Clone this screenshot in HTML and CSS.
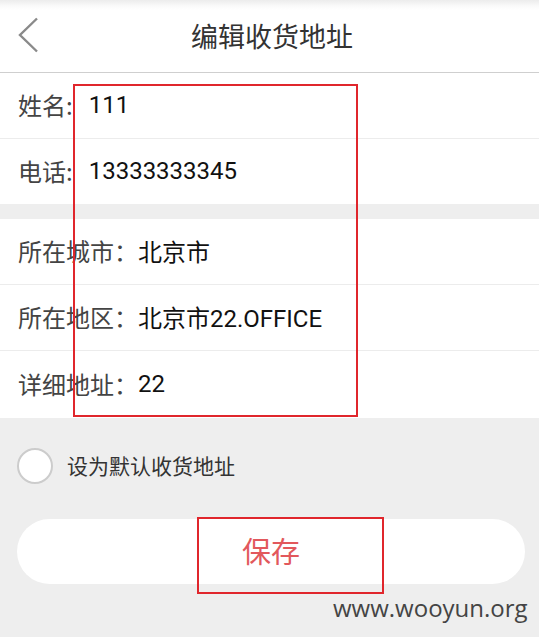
FILE: index.html
```html
<!DOCTYPE html>
<html lang="zh">
<head>
<meta charset="utf-8">
<title>编辑收货地址</title>
<link rel="stylesheet" href="styles.css">
</head>
<body>
<div class="page">
  <header class="topbar">
    <svg class="back" width="22" height="36" viewBox="0 0 22 36"><path d="M20 1.5 L3 18 L20 34.5" fill="none" stroke="#8a8a8a" stroke-width="2.4"/></svg>
    <h1 class="title">编辑收货地址</h1>
  </header>

  <section class="group">
    <div class="row"><span class="label">姓名:</span><span class="value v-short">111</span></div>
    <div class="row"><span class="label">电话:</span><span class="value v-short">13333333345</span></div>
  </section>

  <section class="group group-second">
    <div class="row"><span class="label">所在城市：</span><span class="value">北京市</span></div>
    <div class="row"><span class="label">所在地区：</span><span class="value">北京市22.OFFICE</span></div>
    <div class="row row-last"><span class="label">详细地址：</span><span class="value">22</span></div>
  </section>

  <div class="default-row">
    <span class="radio"></span>
    <span class="default-text">设为默认收货地址</span>
  </div>

  <button class="save">保存</button>

  <div class="mark mark-fields"></div>
  <div class="mark mark-save"></div>
  <div class="watermark">www.wooyun.org</div>
</div>
</body>
</html>
```

FILE: styles.css
```css
* { box-sizing: border-box; }
html, body { margin: 0; padding: 0; }
body {
  background: #eeeeee;
  font-family: "Noto Sans CJK SC", "Noto Sans", sans-serif;
  width: 539px;
  height: 637px;
  overflow: hidden;
}
.page {
  position: relative;
  width: 539px;
  height: 637px;
}
.topbar {
  height: 73px;
  background: linear-gradient(#ececec 0, #fafafa 6px, #ffffff 10px);
  border-bottom: 1px solid #cfcfcf;
  display: flex;
  align-items: center;
  padding-left: 17px;
}
.back { flex: none; margin-top: -2px; }
.title {
  margin: -2px 0 0 152px;
  font-size: 27px;
  font-weight: normal;
  color: #333;
}
.group { background: #fff; }
.group-second { margin-top: 15px; }
.row {
  height: 66px;
  border-bottom: 1px solid #ececec;
  display: flex;
  align-items: center;
  padding-left: 18px;
}
.group .row:last-child { border-bottom: none; height: 65px; }
.group .row-last { height: 67px !important; }
.label {
  font-size: 24px;
  color: #444;
  margin-top: -2px;
}
.value {
  font-family: Roboto, "Noto Sans CJK SC", sans-serif;
  font-size: 24px;
  color: #111;
  margin-top: -2px;
}
.v-short { margin-left: 16px; }
.default-row {
  display: flex;
  align-items: center;
  margin-top: 30px;
  padding-left: 17px;
}
.radio {
  width: 36px;
  height: 36px;
  border-radius: 50%;
  background: #fff;
  border: 2px solid #cccccc;
}
.default-text {
  margin-left: 14px;
  font-size: 21px;
  color: #333;
  margin-top: -2px;
}
.save {
  display: block;
  margin: 35px 14px 0 17px;
  width: 508px;
  height: 65px;
  border: none;
  border-radius: 33px;
  background: #fff;
  color: #e2585c;
  font-family: "Noto Sans CJK SC", sans-serif;
  font-size: 29px;
  padding: 0 0 4px 0;
}
.mark {
  position: absolute;
  border: 2px solid #e0262c;
}
.mark-fields { left: 73px; top: 84px; width: 285px; height: 333px; }
.mark-save { left: 197px; top: 517px; width: 187px; height: 77px; }
.watermark {
  position: absolute;
  left: 333px;
  top: 591px;
  font-family: "Open Sans", "Noto Sans", sans-serif;
  font-size: 24px;
  color: #444;
}
```
